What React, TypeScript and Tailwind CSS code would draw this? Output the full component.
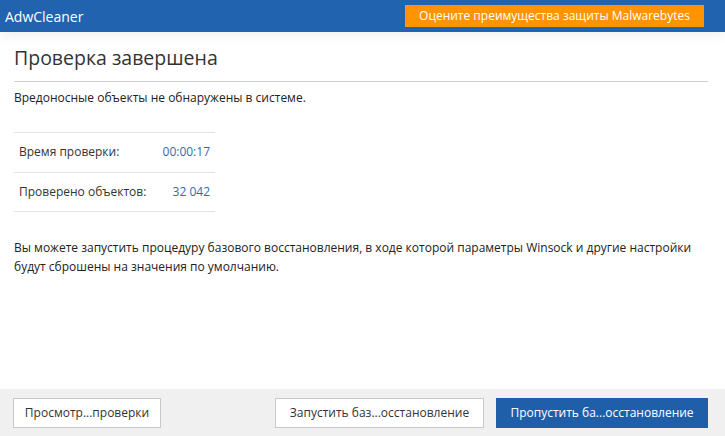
import React from "react";

const font = { fontFamily: '"Open Sans", "Noto Sans", sans-serif' };

function StatRow({ label, value }: { label: string; value: string }) {
  return (
    <div className="flex h-[39.5px] items-center justify-between border-b border-[#e3e3e3] px-[5px] text-[12px]">
      <span className="text-[#333]">{label}</span>
      <span className="text-[#2d6bb0]">{value}</span>
    </div>
  );
}

export default function App() {
  return (
    <div className="flex h-[436px] w-[725px] flex-col bg-white" style={font}>
      {/* Header */}
      <div className="relative z-10 flex h-8 items-center justify-between bg-[#2163ae] pl-[5px] pr-[21px] shadow-[0_4px_12px_rgba(0,0,0,0.06)]">
        <span className="text-[14px] text-white">AdwCleaner</span>
        <button className="h-[22px] w-[299px] bg-[#ff9300] text-[12px] text-white">
          Оцените преимущества защиты Malwarebytes
        </button>
      </div>

      {/* Content */}
      <div className="flex-1 pl-[14px] pr-[17px]">
        <h1 className="pt-[12px] text-[19.5px] leading-[28px] font-normal text-[#333]">Проверка завершена</h1>
        <div className="mt-[9px] border-b border-[#cfcfcf]" />
        <p className="mt-[8px] text-[12px] leading-[16px] text-[#222]">
          Вредоносные объекты не обнаружены в системе.
        </p>

        <div className="mt-[26px] w-[201px] border-t border-[#e3e3e3]">
          <StatRow label="Время проверки:" value="00:00:17" />
          <StatRow label="Проверено объектов:" value="32 042" />
        </div>

        <p className="mt-[26px] text-[12px] leading-[19px] text-[#222]">
          Вы можете запустить процедуру базового восстановления, в ходе которой параметры Winsock и другие настройки
          будут сброшены на значения по умолчанию.
        </p>
      </div>

      {/* Footer */}
      <div className="flex h-[47px] items-start bg-[#f0f0f0] pl-[13px] pr-[17px] pt-[9px]">
        <button className="h-[30px] w-[148px] border border-[#c8c8c8] bg-white text-[12px] text-[#333]">
          Просмотр...проверки
        </button>
        <div className="flex-1" />
        <button className="h-[30px] w-[209px] border border-[#c8c8c8] bg-white text-[12px] text-[#333]">
          Запустить баз...осстановление
        </button>
        <button className="ml-[12px] h-[30px] w-[212px] bg-[#1f5faa] text-[12px] text-white">
          Пропустить ба...осстановление
        </button>
      </div>
    </div>
  );
}
